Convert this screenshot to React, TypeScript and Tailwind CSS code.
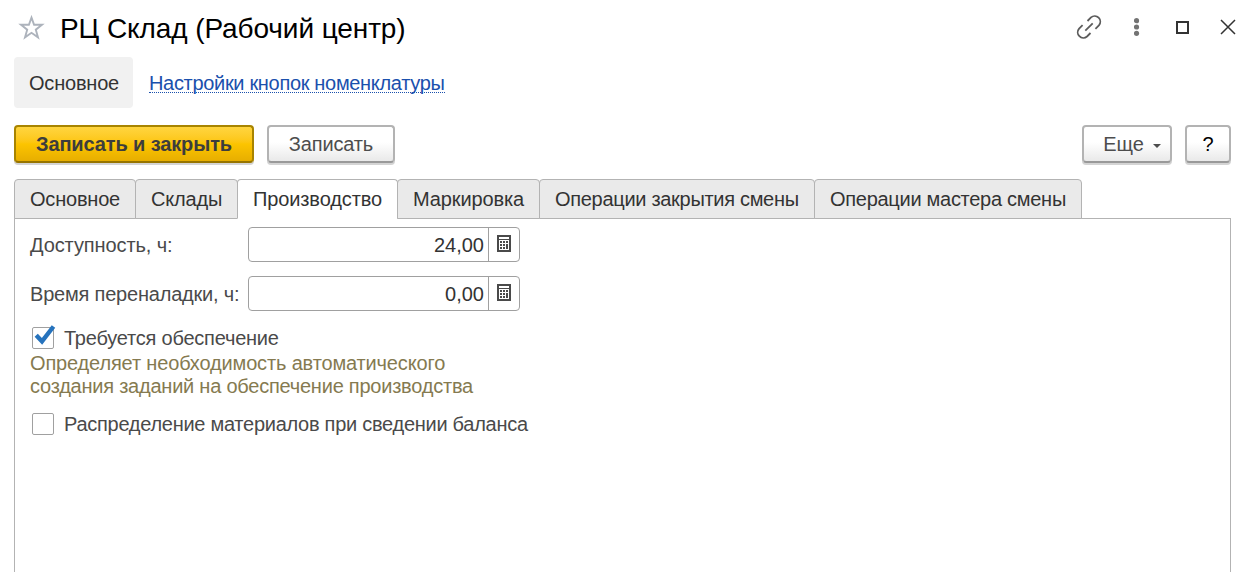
import type { ReactNode } from "react";

const tabs = [
  { label: "Основное", width: "w-[122px]", tracking: "tracking-[-0.2px]" },
  { label: "Склады", width: "w-[103px]", tracking: "tracking-[-0.2px]" },
  { label: "Производство", width: "w-[161px]", tracking: "tracking-[-0.12px]", active: true },
  { label: "Маркировка", width: "w-[143px]", tracking: "tracking-[-0.12px]" },
  { label: "Операции закрытия смены", width: "w-[276px]", tracking: "tracking-[-0.3px]" },
  { label: "Операции мастера смены", width: "w-[268px]", tracking: "tracking-[-0.28px]" },
];

function CalculatorIcon() {
  return (
    <svg width="14" height="17" viewBox="0 0 14 17" fill="#4a4a4a" shapeRendering="crispEdges">
      <path fillRule="evenodd" d="M0 0H14V17H0ZM2 2V4H12V2ZM2 5V15H12V5Z" />
      <path d="M3 6H5V8H3ZM6 6H8V8H6ZM9 6H11V8H9ZM3 9H5V11H3ZM6 9H8V11H6ZM3 12H5V14H3ZM6 12H8V14H6ZM9 9H11V14H9Z" />
    </svg>
  );
}

function NumberField({ value }: { value: string }) {
  return (
    <div className="flex h-[35px] w-[272px] rounded-[4px] border border-[#a0a0a0] bg-white">
      <div className="flex flex-1 items-center justify-end pt-px pr-1 text-[#333]">{value}</div>
      <button className="flex w-[31px] justify-center border-l border-[#a0a0a0] pt-[7px]">
        <CalculatorIcon />
      </button>
    </div>
  );
}

function Checkbox({ checked }: { checked?: boolean }) {
  return (
    <span className="relative -top-px block size-[22px] rounded-[2px] border border-[#a0a0a0] bg-white">
      {checked && (
        <svg className="absolute -top-[3px] left-0 overflow-visible" width="24" height="22" viewBox="0 0 24 22">
          <path d="M3.2 10.2L9 16.3L20.5 1.5" fill="none" stroke="#2673bd" strokeWidth="4.4" />
        </svg>
      )}
    </span>
  );
}

function Button({ className, children }: { className: string; children: ReactNode }) {
  return (
    <button
      className={`flex h-[38px] items-center justify-center rounded-[4px] border-2 shadow-[0_2px_0_#d4d4d4] ${className}`}
    >
      {children}
    </button>
  );
}

const plain = "border-[#b3b3b3] border-b-[#999] bg-linear-to-b from-white from-45% to-[#e9e9e9] text-[#4d4d4d]";

export default function App() {
  return (
    <main className="flex h-[572px] w-[1254px] flex-col overflow-hidden bg-white font-['Liberation_Sans',Arial,sans-serif] text-[20px] leading-[23px] whitespace-nowrap text-[#4a4a4a]">
      <header className="flex h-[57px] shrink-0 items-center pl-[18px]">
        <svg width="27" height="27" viewBox="0 0 27 27" fill="none" stroke="#adb3bc" strokeWidth="1.9">
          <path d="M13.5 2.6L16.1 9.8H24L17.8 14.7L20 22.4L13.5 17.8L7 22.4L9.2 14.7L3 9.8H10.9Z" />
        </svg>
        <h1 className="ml-[15px] text-[28px] leading-8 tracking-[-0.09px] text-black">РЦ Склад (Рабочий центр)</h1>
        <div className="ml-auto flex h-[54px] items-center self-start">
          <svg className="mr-[32px]" width="26" height="26" viewBox="0 0 26 26" fill="none" stroke="#5c5c5c" strokeWidth="1.8">
            <path d="M11.5 7L15 3.4A5.6 5.6 0 0 1 22.9 11.3L19.4 14.8M14.5 19L11 22.5A5.6 5.6 0 0 1 3.1 14.6L6.6 11.1M9.3 16.6L16.7 9.3" />
          </svg>
          <svg className="mr-[36px]" width="6" height="18" viewBox="0 0 6 18" fill="#737373">
            <circle cx="2.5" cy="2.7" r="2.6" />
            <circle cx="2.5" cy="9" r="2.6" />
            <circle cx="2.5" cy="15.3" r="2.6" />
          </svg>
          <span className="mr-[31px] size-[13px] border-2 border-[#333]" />
          <svg className="mr-[18px]" width="16" height="16" viewBox="0 0 16 16" stroke="#333" strokeWidth="1.5">
            <path d="M1 1L15 15M15 1L1 15" />
          </svg>
        </div>
      </header>

      <nav className="flex h-[51px] shrink-0 items-center pl-[14px]">
        <span className="flex h-full w-[119px] items-center rounded-[4px] bg-[#f1f1f1] pt-px pl-[15px] tracking-[-0.2px] text-[#333]">
          Основное
        </span>
        <a className="mt-px ml-4 flex h-[20px] items-center border-b border-dotted border-[#1a50ad] pt-px tracking-[-0.32px] text-[#1a50ad]">
          Настройки кнопок номенклатуры
        </a>
      </nav>

      <div className="mt-[17px] flex shrink-0 px-[14px]">
        <Button className="w-[240px] border-[#a88400] border-b-[#967400] bg-linear-to-b from-[#ffd53e] via-[#fcc400] to-[#e7ae00] font-bold tracking-[-0.12px] text-[#3d3d3d]">
          Записать и закрыть
        </Button>
        <Button className={`ml-[13px] w-[128px] tracking-[-0.15px] ${plain}`}>Записать</Button>
        <Button className={`ml-auto w-[90px] gap-[9px] pl-[10px] ${plain}`}>
          Еще
          <span className="mt-1 border-x-4 border-t-4 border-x-transparent border-t-[#4d4d4d]" />
        </Button>
        <Button className={`mr-[9px] ml-[13px] w-[46px] ${plain}`}>
          <span className="text-black">?</span>
        </Button>
      </div>

      <div className="mt-4 flex shrink-0 pl-[14px]">
        {tabs.map((t, i) => (
          <div
            key={t.label}
            className={`z-10 flex h-10 items-center rounded-t-[4px] border border-[#b3b3b3] pl-[15px] text-[#333] ${i ? "-ml-px" : ""} ${t.active ? "border-b-white bg-white" : "bg-[#eaeaea]"} ${t.width} ${t.tracking}`}
          >
            {t.label}
          </div>
        ))}
      </div>

      <section className="-mt-px mr-[23px] ml-[14px] flex-1 border border-b-0 border-[#b3b3b3] pt-2 pl-[15px]">
        <div className="flex items-center">
          <label className="w-[218px] pt-px tracking-[-0.1px]">Доступность, ч:</label>
          <NumberField value="24,00" />
        </div>
        <div className="mt-[14px] flex items-center">
          <label className="w-[218px] pt-px tracking-[-0.2px]">Время переналадки, ч:</label>
          <NumberField value="0,00" />
        </div>
        <div className="mt-4 ml-[2px] flex items-center gap-[10px]">
          <Checkbox checked />
          <span className="tracking-[-0.22px]">Требуется обеспечение</span>
        </div>
        <p className="mt-[2px] text-[#857a50]">
          <span className="block tracking-[-0.15px]">Определяет необходимость автоматического</span>
          <span className="block tracking-[-0.23px]">создания заданий на обеспечение производства</span>
        </p>
        <div className="mt-[15px] ml-[2px] flex items-center gap-[10px]">
          <Checkbox />
          <span className="tracking-[-0.27px]">Распределение материалов при сведении баланса</span>
        </div>
      </section>
    </main>
  );
}
